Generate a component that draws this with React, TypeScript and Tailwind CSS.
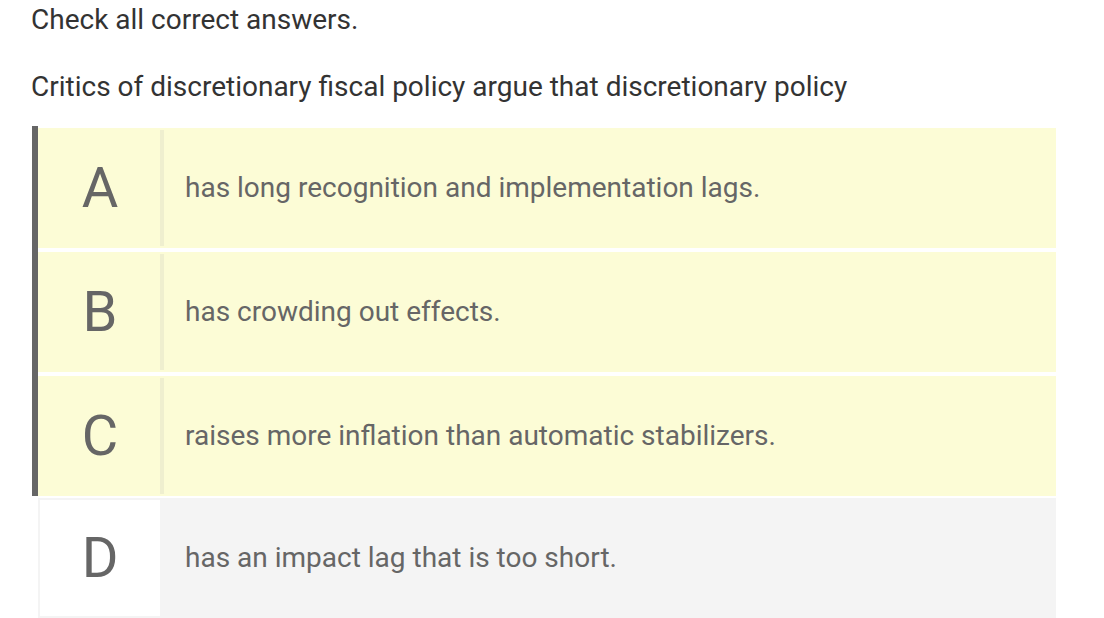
import React from "react";

const rows = [
  { l: "A", t: "has long recognition and implementation lags." },
  { l: "B", t: "has crowding out effects." },
  { l: "C", t: "raises more inflation than automatic stabilizers." },
];

function Row({ l, t }: { l: string; t: string }) {
  return (
    <div className="flex h-[120px] bg-[#fcfcd6]">
      <div className="my-[2px] ml-[2px] w-[124px] border-r-4 border-[#efefcf] flex items-center justify-center text-[56px] leading-none text-[#666666]">
        {l}
      </div>
      <div className="flex items-center pl-[21px] text-[28px] text-[#666666]">{t}</div>
    </div>
  );
}

export default function App() {
  return (
    <div className="bg-white w-[1104px] h-[618px] overflow-hidden" style={{ fontFamily: "Roboto, 'Liberation Sans', sans-serif" }}>
      <div className="pl-[31px] pt-[4px] text-[28px] leading-[32px] text-[#333333]">Check all correct answers.</div>
      <div className="pl-[31px] pt-[35px] text-[28px] leading-[32px] text-[#333333]">
        Critics of discretionary fiscal policy argue that discretionary policy
      </div>
      <div className="ml-[32px] w-[1024px] mt-[23px]">
        <div className="border-l-[6px] border-[#666666] pt-[2px] flex flex-col gap-[4px]">
          {rows.map((r) => (
            <Row key={r.l} l={r.l} t={r.t} />
          ))}
        </div>
        <div className="ml-[6px] mt-[2px] flex h-[120px] bg-[#f4f4f4]">
          <div className="my-[2px] ml-[2px] w-[120px] bg-white flex items-center justify-center text-[56px] leading-none text-[#666666]">
            D
          </div>
          <div className="flex items-center pl-[25px] text-[28px] text-[#666666]">has an impact lag that is too short.</div>
        </div>
      </div>
    </div>
  );
}
